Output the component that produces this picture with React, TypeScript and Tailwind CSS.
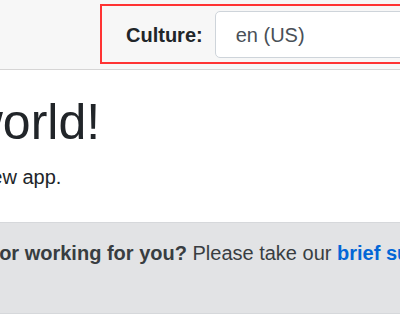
export default function App() {
  const font = { fontFamily: '"Liberation Sans", Arial, sans-serif' };
  return (
    <div className="w-[400px] h-[329px] overflow-hidden bg-white text-[#212529]" style={font}>
      <div className="h-[70px] bg-[#f7f7f7] border-b border-[#d6d5d5] flex items-start pt-[4px] pl-[100px]">
        <div className="flex items-center w-[420px] shrink-0 border-2 border-[#ff3333] pl-[24px] pt-[5px] pb-[4px]">
          <span className="text-[20px] leading-[30px] font-bold text-[#212529]">Culture:</span>
          <div className="ml-[12px] w-[300px] shrink-0 h-[47px] bg-white border border-[#ced4da] rounded-[5px] pl-[20px] flex items-center text-[20px] leading-[30px] text-[#495057]">
            en (US)
          </div>
        </div>
      </div>
      <div className="ml-[-175px] w-[800px] pt-[22px]">
        <h1 className="text-[50px] leading-[60px] font-normal mb-[10px] text-[#212529]">Hello, world!</h1>
        <div className="text-[20px] leading-[30px]">Welcome to your new app.</div>
        <div className="mt-[30px] h-[92px] bg-[#e2e3e5] border border-[#d6d8db] rounded-[5px] pl-[62px] py-[15px] text-[20px] leading-[30px] text-[#383d41] whitespace-nowrap">
          <strong className="font-bold">How is Blazor working for you?</strong>{" "}
          <span>
            Please take our{" "}
            <a href="#" className="font-bold text-[#0366d6] no-underline">brief survey</a>
          </span>
        </div>
      </div>
    </div>
  );
}
